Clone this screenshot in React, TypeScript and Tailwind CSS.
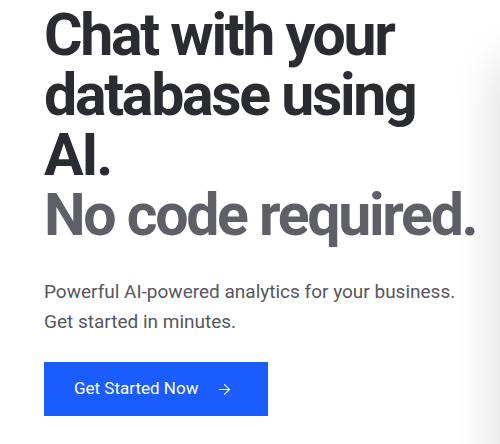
import React from 'react'
import { ArrowRight } from 'lucide-react'

const App = () => {
  return (
    <div className="relative w-[500px] h-[444px] overflow-hidden bg-white font-['Roboto',sans-serif]">
      <div className="pl-[44px] pt-[5px]">
        <h1 className="text-[59px] leading-[60px] font-bold tracking-[-2.3px] whitespace-nowrap text-[#2b2c31]">
          Chat with your
          <br />
          database using
          <br />
          AI.
          <br />
          <span className="text-[#5f5f68]">No code required.</span>
        </h1>
        <p className="mt-[32px] text-[19px] leading-[30px] text-[#56565e]">
          Powerful AI-powered analytics for your business.
          <br />
          Get started in minutes.
        </p>
        <button className="mt-[25px] flex items-center w-[224px] h-[54px] pl-[30px] gap-[18px] bg-[#1a5cff] text-white text-[17px]">
          Get Started Now
          <ArrowRight size={17} strokeWidth={1.5} />
        </button>
      </div>
      <div className="absolute left-[500px] top-[60px] w-[300px] h-[600px] rounded-2xl bg-white shadow-[0_0_50px_rgba(0,0,0,0.16)]" />
    </div>
  )
}

export default App
